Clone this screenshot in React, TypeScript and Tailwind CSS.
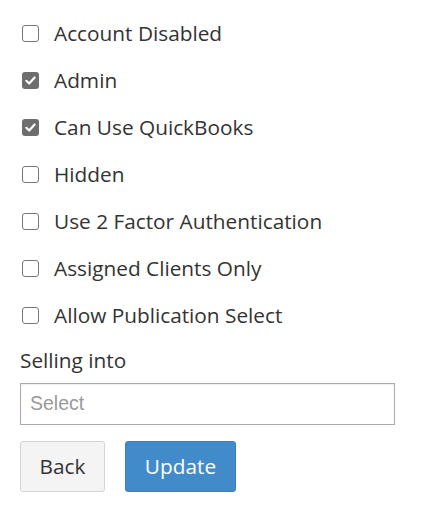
import React from "react";

const items: { label: string; checked: boolean }[] = [
  { label: "Account Disabled", checked: false },
  { label: "Admin", checked: true },
  { label: "Can Use QuickBooks", checked: true },
  { label: "Hidden", checked: false },
  { label: "Use 2 Factor Authentication", checked: false },
  { label: "Assigned Clients Only", checked: false },
  { label: "Allow Publication Select", checked: false },
];

function Box({ checked }: { checked: boolean }) {
  if (checked) {
    return (
      <span className="flex h-[17px] w-[17px] items-center justify-center rounded-[3px] bg-[#6e6e6e]">
        <svg width="13" height="13" viewBox="0 0 12 12" fill="none">
          <path d="M2.2 6.3 L4.8 8.8 L9.8 3.2" stroke="#fff" strokeWidth="2" strokeLinecap="round" strokeLinejoin="round" />
        </svg>
      </span>
    );
  }
  return <span className="block h-[17px] w-[17px] rounded-[3px] border border-[#767676] bg-white" />;
}

export default function App() {
  return (
    <div className="bg-white pl-[20px] pt-[9px] text-[#333] [font-family:'Open_Sans',sans-serif]">
      {items.map((it) => (
        <div key={it.label} className="flex h-[47px] items-center">
          <span className="ml-[2px] mr-[15px] mt-[1px]">
            <Box checked={it.checked} />
          </span>
          <span className="text-[20.8px] leading-[28px]">{it.label}</span>
        </div>
      ))}
      <div className="mt-[8px] text-[20.8px] leading-[28px]">Selling into</div>
      <div className="mt-[9px] flex h-[42px] w-[375px] items-center border border-[#aaa] bg-white pl-[9px] text-[19.5px] text-[#999] shadow-[inset_0_1px_2px_rgba(0,0,0,0.08)] [font-family:'Liberation_Sans',Arial,sans-serif]">
        Select
      </div>
      <div className="mt-[16px] flex gap-[20px]">
        <button className="h-[51px] w-[85px] rounded-[3px] border border-[#d4d4d4] bg-[#f4f4f4] text-[20.8px] text-[#333]">
          Back
        </button>
        <button className="h-[51px] w-[111px] rounded-[3px] border border-[#3a80c1] bg-[#428bca] text-[20.8px] text-white">
          Update
        </button>
      </div>
    </div>
  );
}
